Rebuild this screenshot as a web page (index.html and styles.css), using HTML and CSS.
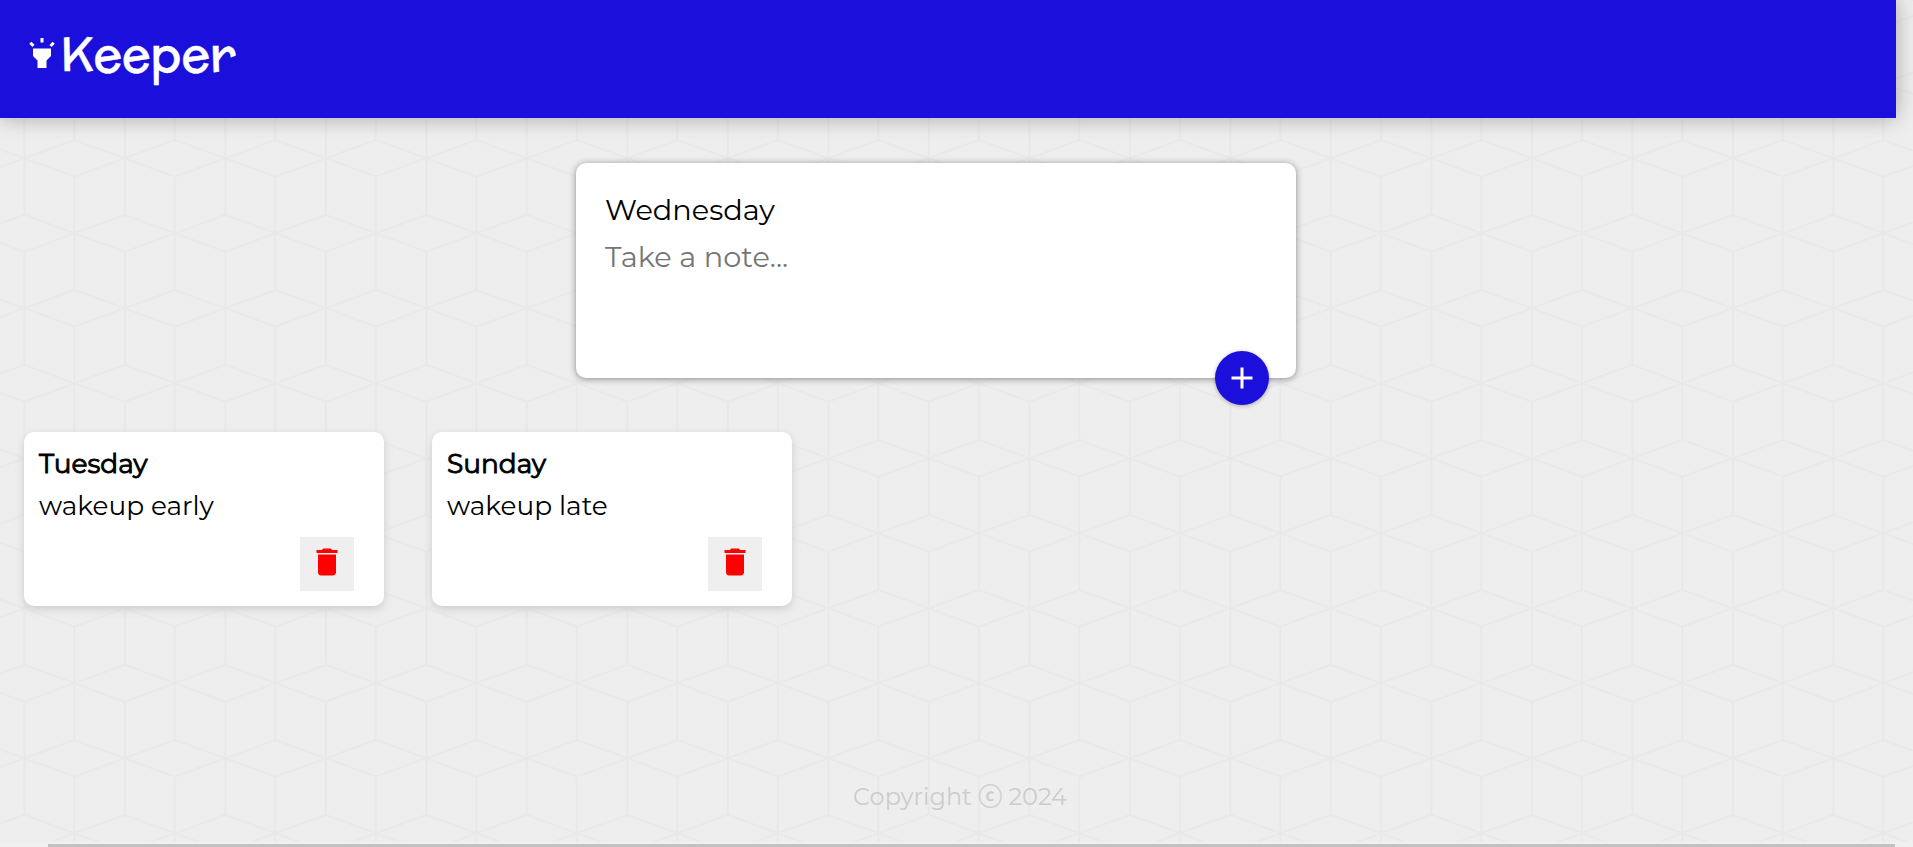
FILE: index.html
```html
<!DOCTYPE html>
<html lang="en">
<head>
<meta charset="utf-8">
<title>Keeper</title>
<link rel="stylesheet" href="styles.css">
</head>
<body>
<svg class="backdrop" aria-hidden="true">
  <defs>
    <pattern id="cubes" x="24.4" y="8.3" width="100.5" height="150" patternUnits="userSpaceOnUse">
      <g class="cube-lines">
        <path d="M0 0V56.6M0 93.4V150M100.5 0V56.6M100.5 93.4V150M50 18.4V131.6"/>
        <path d="M0 0L50 18.4L100.5 0M0 150L50 131.6L100.5 150M0 56.6L50 75L0 93.4M100.5 56.6L50 75L100.5 93.4"/>
      </g>
    </pattern>
  </defs>
  <rect width="100%" height="100%" fill="url(#cubes)"/>
</svg>
<div class="page">
  <header class="header">
    <svg class="icon" viewBox="0 0 24 24"><path d="m6 14 3 3v5h6v-5l3-3V9H6zm5-12h2v3h-2zM3.5 5.875 4.914 4.46l2.12 2.122L5.62 7.997zm13.46.71 2.123-2.12 1.414 1.414L18.375 8z"/></svg>
    <h1 class="brand">Keeper</h1>
  </header>
  <main>
    <form class="create-note">
      <div class="field title">Wednesday</div>
      <div class="field content">Take a note...</div>
      <button class="add" type="button" aria-label="Add"><svg class="icon" viewBox="0 0 24 24"><path d="M19 13h-6v6h-2v-6H5v-2h6V5h2v6h6z"/></svg></button>
    </form>
    <section class="notes">
      <article class="note">
        <h2>Tuesday</h2>
        <p>wakeup early</p>
        <button class="delete" type="button" aria-label="Delete"><svg class="icon" viewBox="0 0 24 24"><path d="M6 19c0 1.1.9 2 2 2h8c1.1 0 2-.9 2-2V7H6zM19 4h-3.5l-1-1h-5l-1 1H5v2h14z"/></svg></button>
      </article>
      <article class="note">
        <h2>Sunday</h2>
        <p>wakeup late</p>
        <button class="delete" type="button" aria-label="Delete"><svg class="icon" viewBox="0 0 24 24"><path d="M6 19c0 1.1.9 2 2 2h8c1.1 0 2-.9 2-2V7H6zM19 4h-3.5l-1-1h-5l-1 1H5v2h14z"/></svg></button>
      </article>
    </section>
  </main>
  <footer class="footer"><p>Copyright <span class="mark">ⓒ</span> 2024</p></footer>
  <div class="scrollbar"><div class="thumb"></div></div>
</div>
</body>
</html>
```
FILE: styles.css
```css
* { box-sizing: border-box; margin: 0; padding: 0; }
body {
  background: #eee;
  font-family: Montserrat, Inter, sans-serif;
  font-weight: 400;
  overflow: hidden;
}
.backdrop { position: absolute; inset: 0; width: 100%; height: 100%; z-index: -1; }
.cube-lines { fill: none; stroke: #e8e8e8; stroke-width: 1.8; }
.icon { width: 36px; height: 36px; fill: currentColor; display: block; flex: none; }
.page { height: 847px; display: flex; flex-direction: column; }
.header {
  width: 1896px;
  height: 118px;
  padding: 35px 24px 0;
  display: flex;
  align-items: flex-start;
  background: #1b0fdc;
  color: #fff;
  box-shadow: 0 0 20px rgba(0, 0, 0, .3);
}
.brand {
  font: 400 48px/60px McLaren, Lato, sans-serif;
  -webkit-text-stroke: .4px #fff;
  margin: -11px 0 0;
}
main { flex: 1; }
.create-note {
  position: relative;
  width: 720px;
  height: 215px;
  margin: 45px 0 0 576px;
  padding: 24px 29px;
  background: #fff;
  border-radius: 10px;
  box-shadow: 0 1px 7px #8a8989;
}
.field { height: 47px; font-size: 28.8px; line-height: 46px; white-space: nowrap; }
.title { color: #000; }
.content { color: #757575; }
button { border: 0; display: flex; justify-content: center; }
.add {
  position: absolute;
  right: 27px;
  bottom: -27px;
  width: 54px;
  height: 54px;
  align-items: center;
  border-radius: 50%;
  background: #1b0fdc;
  color: #fff;
  box-shadow: 0 1px 4px rgba(0, 0, 0, .3);
}
.notes { display: flex; gap: 48px; padding: 54px 24px 0; }
.note {
  width: 360px;
  height: 174px;
  padding: 12px 15px;
  background: #fff;
  border-radius: 10px;
  box-shadow: 0 3px 8px #ccc;
}
.note h2 { font-size: 26.4px; line-height: 40px; font-weight: 400; -webkit-text-stroke: .9px #000; }
.note p { font-size: 26.4px; line-height: 40px; margin-top: 2px; }
.delete {
  width: 54px;
  height: 54px;
  margin: 11px 15px 0 auto;
  padding-top: 7px;
  background: #efefef;
  color: #f00;
}
.footer { width: 1920px; height: 63px; text-align: center; color: #ccc; font-size: 24px; line-height: 36px; }
.mark { font-family: "Noto Sans CJK JP", sans-serif; line-height: 1; -webkit-text-stroke: .4px #ccc; }
.scrollbar { height: 5px; padding: 2px 18px 0 48px; background: #f0f0f0; }
.thumb { height: 3px; background: #c1c1c1; }
```
